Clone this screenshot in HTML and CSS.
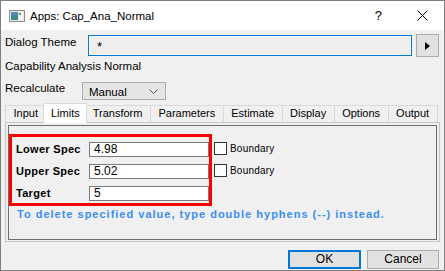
FILE: index.html
```html
<html>
  <head>
    <link rel="stylesheet" href="styles.css">
  </head>
  <body>
    <div class="window">
      <div class="titlebar">
        <svg class="app-icon" width="16" height="12" viewBox="0 0 16 12">
          <rect x="0.5" y="0.5" width="15" height="11" fill="#e8e8e8" stroke="#8c8c8c"/>
          <rect x="2" y="2" width="7" height="8" fill="#3f8a8c"/>
          <rect x="2" y="2" width="7" height="3" fill="#5b86b8"/>
          <rect x="10" y="2" width="4" height="8" fill="#f6f6f6"/>
          <rect x="10" y="3" width="2" height="2" fill="#4f9a6a"/>
        </svg>
        <div class="title">Apps: Cap_Ana_Normal</div>
        <div class="help">?</div>
        <svg class="close" width="11" height="11" viewBox="0 0 11 11">
          <path d="M0.5 0.5 L10.5 10.5 M10.5 0.5 L0.5 10.5" stroke="#000" stroke-width="1"/>
        </svg>
      </div>

      <div class="dialog">
        <div class="theme-row">
          <div class="theme-label">Dialog Theme</div>
          <div class="theme-box">*</div>
          <div class="theme-btn">
            <svg width="7" height="8" viewBox="0 0 7 8"><path d="M1 0 L6 4 L1 8 Z" fill="#000"/></svg>
          </div>
        </div>

        <div class="caption">Capability Analysis Normal</div>

        <div class="recalc-row">
          <div class="recalc-label">Recalculate</div>
          <div class="select">
            <span>Manual</span>
            <svg width="9" height="5" viewBox="0 0 9 5"><path d="M0.5 0.5 L4.5 4.5 L8.5 0.5" fill="none" stroke="#555"/></svg>
          </div>
        </div>

        <div class="tabs">
          <div class="tab">Input</div>
          <div class="tab active">Limits</div>
          <div class="tab">Transform</div>
          <div class="tab">Parameters</div>
          <div class="tab">Estimate</div>
          <div class="tab">Display</div>
          <div class="tab">Options</div>
          <div class="tab">Output</div>
        </div>

        <div class="tab-panel">
          <div class="group">
            <div class="limits">
              <div class="spec-box">
                <div class="spec-row">
                  <div class="spec-label">Lower Spec</div>
                  <div class="field">4.98</div>
                </div>
                <div class="spec-row">
                  <div class="spec-label">Upper Spec</div>
                  <div class="field">5.02</div>
                </div>
                <div class="spec-row">
                  <div class="spec-label">Target</div>
                  <div class="field">5</div>
                </div>
              </div>
              <div class="bounds">
                <div class="bound"><span class="check"></span>Boundary</div>
                <div class="bound"><span class="check"></span>Boundary</div>
              </div>
            </div>
            <div class="hint">To delete specified value, type double hyphens (--) instead.</div>
          </div>
        </div>

        <div class="actions">
          <div class="btn default">OK</div>
          <div class="btn">Cancel</div>
        </div>
      </div>
    </div>
  </body>
</html>
```

FILE: styles.css
```css
body {
  margin: 0;
  font-family: "Liberation Sans", Arial, sans-serif;
  color: #000;
}
.window {
  width: 445px;
  height: 271px;
  box-sizing: border-box;
  border: 1px solid #7f7f7f;
  background: #f0f0f0;
}

/* title bar */
.titlebar {
  height: 29px;
  background: #fff;
  display: flex;
  align-items: center;
  padding-left: 8px;
}
.app-icon {
  margin-top: 1px;
}
.title {
  margin-left: 5px;
  font-size: 11.5px;
}
.help {
  margin-left: auto;
  margin-right: 35px;
  font-size: 13px;
}
.close {
  margin-right: 16px;
}

.dialog {
  padding: 0 4px;
  font-size: 11.5px;
}

/* theme */
.theme-row {
  display: flex;
  align-items: flex-start;
  margin-top: 4px;
  height: 23px;
}
.theme-label {
  width: 83px;
  line-height: 14px;
  margin-top: 1px;
}
.theme-box {
  width: 324px;
  height: 21px;
  box-sizing: border-box;
  margin-top: 1px;
  border: 1px solid #0078d7;
  background: #eeeeee;
  box-shadow: inset 0 0 0 1px #f8f8f8;
  padding: 3px 0 0 8px;
  font-size: 13px;
}
.theme-btn {
  width: 23px;
  height: 23px;
  box-sizing: border-box;
  margin-left: 4px;
  border: 1px solid #adadad;
  background: #e1e1e1;
  display: flex;
  align-items: center;
  justify-content: center;
}

.caption {
  margin-top: 2px;
  line-height: 14px;
}

/* recalculate */
.recalc-row {
  display: flex;
  margin-top: 9px;
}
.recalc-label {
  width: 77px;
  line-height: 13px;
}
.select {
  width: 84px;
  height: 18px;
  box-sizing: border-box;
  border: 1px solid #adadad;
  background: #e5e5e5;
  display: flex;
  align-items: center;
  justify-content: space-between;
  padding: 1px 7px 0 6px;
}

/* tabs */
.tabs {
  display: flex;
  align-items: flex-end;
  height: 19px;
  margin-top: 3px;
  padding-left: 1px;
  font-size: 11px;
}
.tab {
  height: 17px;
  box-sizing: border-box;
  border: 1px solid #d9d9d9;
  border-bottom: 0;
  margin-left: -1px;
  padding: 1px 7.5px 0;
  color: #000;
}
.tab.active {
  position: relative;
  height: 20px;
  margin: 0 -2px -1px -3px;
  padding: 3px 6.5px 0;
  background: #fff;
  z-index: 1;
}

.tab-panel {
  border: 1px solid #c6c6c6;
  padding: 2px 2px 1px;
  height: 120px;
  box-sizing: border-box;
}
.group {
  height: 100%;
  box-sizing: border-box;
  border: 1px solid #6e6e6e;
}

/* limits */
.limits {
  display: flex;
  align-items: flex-start;
  margin-top: 8px;
}
.spec-box {
  width: 203px;
  box-sizing: border-box;
  border: 3px solid #ff0000;
  padding: 5px 0 2px 4px;
  display: flex;
  flex-direction: column;
  gap: 7px;
}
.spec-row {
  display: flex;
  align-items: center;
  height: 15px;
}
.spec-label {
  width: 73px;
  font-weight: bold;
  font-size: 11px;
  letter-spacing: 0.3px;
  margin-top: -2px;
}
.field {
  width: 120px;
  height: 15px;
  box-sizing: border-box;
  border: 1px solid #7a7a7a;
  background: #fff;
  padding-left: 4px;
  font-size: 12px;
  line-height: 13px;
}
.bounds {
  display: flex;
  flex-direction: column;
  gap: 9px;
  margin-top: 8px;
  margin-left: 2px;
}
.bound {
  display: flex;
  align-items: center;
  height: 13px;
  font-size: 10px;
  letter-spacing: 0.2px;
}
.check {
  width: 13px;
  height: 13px;
  box-sizing: border-box;
  border: 1px solid #333;
  background: #fff;
  margin-right: 3px;
}
.hint {
  margin-top: 1px;
  padding-left: 8px;
  line-height: 14px;
  font-size: 11px;
  font-weight: bold;
  letter-spacing: 1px;
  color: #3a8ef0;
}

/* buttons */
.actions {
  display: flex;
  justify-content: flex-end;
  gap: 6px;
  margin-top: 8px;
  margin-right: 1px;
}
.btn {
  width: 72px;
  height: 19px;
  box-sizing: border-box;
  border: 1px solid #adadad;
  background: #e1e1e1;
  text-align: center;
  font-size: 12px;
  line-height: 17px;
}
.btn.default {
  width: 73px;
  border: 2px solid #0078d7;
  line-height: 15px;
}
```
